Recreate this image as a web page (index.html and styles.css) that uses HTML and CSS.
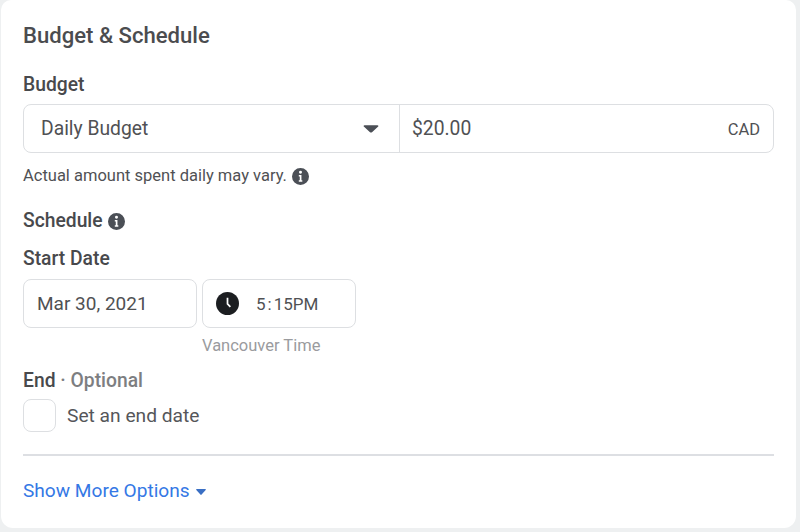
FILE: index.html
```html
<!DOCTYPE html>
<html lang="en">
<head>
    <meta charset="UTF-8">
    <title>Budget &amp; Schedule</title>
    <link rel="stylesheet" href="styles.css">
</head>
<body>
<div class="card">
    <h2 class="title">Budget &amp; Schedule</h2>

    <div class="label budget-label">Budget</div>
    <div class="budget-row">
        <div class="budget-select">
            <span>Daily Budget</span>
            <svg class="caret" width="16" height="9" viewBox="0 0 16 9"><path d="M1.5 1.2h13c.8 0 1.2.8.7 1.4L9 8.2c-.6.5-1.4.5-2 0L.8 2.6c-.5-.6-.1-1.4.7-1.4z"/></svg>
        </div>
        <div class="budget-amount">
            <span>$20.00</span>
            <span class="currency">CAD</span>
        </div>
    </div>
    <div class="hint">
        <span>Actual amount spent daily may vary.</span>
        <svg class="info" width="17" height="17" viewBox="0 0 16 16"><use href="#info-icon"/></svg>
    </div>

    <div class="label schedule-label">
        <span>Schedule</span>
        <svg class="info" width="17" height="17" viewBox="0 0 16 16"><use href="#info-icon"/></svg>
    </div>
    <div class="label start-label">Start Date</div>
    <div class="date-row">
        <div class="field date-field">Mar 30, 2021</div>
        <div class="time-col">
            <div class="field time-field">
                <svg width="23" height="23" viewBox="0 0 24 24"><circle cx="12" cy="12" r="12" fill="#1c1e21"/><path d="M12 6V12.5L15 15.5" fill="none" stroke="#fff" stroke-width="1.8"/></svg>
                <span class="time-text">5<span class="colon">:</span>15PM</span>
            </div>
            <div class="timezone">Vancouver Time</div>
        </div>
    </div>

    <div class="label end-label">End <span class="optional">· Optional</span></div>
    <div class="end-row">
        <div class="checkbox"></div>
        <span>Set an end date</span>
    </div>

    <div class="divider"></div>
    <div class="more">
        <span>Show More Options</span>
        <svg width="10" height="6" viewBox="0 0 10 6"><path d="M.8 0h8.4c.6 0 .9.7.5 1.1L5.6 5.6c-.3.4-.9.4-1.2 0L.3 1.1C-.1.7.2 0 .8 0z"/></svg>
    </div>
</div>

<svg class="defs" width="0" height="0">
    <symbol id="info-icon" viewBox="0 0 16 16">
        <path fill-rule="evenodd" d="M8 0a8 8 0 1 1 0 16A8 8 0 0 1 8 0zm0 2.6a1.4 1.4 0 1 0 0 2.8 1.4 1.4 0 0 0 0-2.8zM6.4 6.6v1.5h.9v3.4h-.9V13h3.3v-1.5h-.8V6.6z"/>
    </symbol>
</svg>
</body>
</html>
```

FILE: styles.css
```css
html, body {
    margin: 0;
    height: 100%;
}
body {
    width: 800px;
    height: 532px;
    overflow: hidden;
    background-color: #eef0f1;
    font-family: Roboto, "Liberation Sans", sans-serif;
    color: #4b4c4f;
}
.card {
    box-sizing: border-box;
    width: 795px;
    height: 528px;
    margin-left: 1px;
    padding: 22px 22px 0;
    background-color: #fff;
    border-radius: 10px 10px 12px 12px;
}
.title {
    margin: 0;
    font-size: 22.1px;
    line-height: 26px;
    font-weight: 500;
    color: #4b4c4f;
}
.label {
    font-size: 19.3px;
    line-height: 24px;
    font-weight: 500;
    color: #48494c;
}
.budget-label {
    margin-top: 25px;
}
.budget-row {
    box-sizing: border-box;
    display: flex;
    width: 751px;
    height: 49px;
    margin-top: 7px;
    border: 1px solid #dddfe2;
    border-radius: 8px;
    font-size: 19.3px;
    color: #505154;
}
.budget-select {
    box-sizing: border-box;
    display: flex;
    align-items: center;
    justify-content: space-between;
    width: 376px;
    padding: 0 20px 0 17px;
    border-right: 1px solid #dddfe2;
}
.caret {
    fill: #4b4f56;
}
.budget-amount {
    flex: 1;
    display: flex;
    align-items: center;
    justify-content: space-between;
    padding: 0 13px 0 12px;
}
.currency {
    font-size: 16.5px;
    margin-top: 2px;
}
.hint {
    display: flex;
    align-items: center;
    gap: 5px;
    margin-top: 13px;
    font-size: 16.5px;
    line-height: 20px;
    color: #505154;
}
.info {
    fill: #4b4f56;
    flex: none;
}
.schedule-label {
    display: flex;
    align-items: center;
    gap: 5px;
    margin-top: 23px;
}
.start-label {
    margin-top: 14px;
}
.date-row {
    display: flex;
    gap: 5px;
    margin-top: 8px;
}
.field {
    box-sizing: border-box;
    height: 49px;
    border: 1px solid #dddfe2;
    border-radius: 8px;
    display: flex;
    align-items: center;
    font-size: 19px;
    color: #505154;
}
.date-field {
    width: 174px;
    padding-left: 13px;
}
.time-col {
    width: 154px;
}
.time-field {
    padding-left: 13px;
    gap: 17px;
}
.time-text {
    font-size: 17px;
}
.colon {
    margin: 0 2px;
}
.timezone {
    margin-top: 8px;
    font-size: 16.5px;
    line-height: 20px;
    color: #9a9b9e;
}
.end-label {
    margin-top: 13px;
}
.optional {
    color: #7d7e81;
}
.end-row {
    display: flex;
    align-items: center;
    gap: 11px;
    margin-top: 6px;
    font-size: 19.2px;
    color: #55565a;
}
.checkbox {
    box-sizing: border-box;
    width: 33px;
    height: 33px;
    border: 1px solid #dddfe2;
    border-radius: 8px;
}
.divider {
    width: 751px;
    height: 2px;
    margin-top: 22px;
    background-color: #dddfe3;
}
.more {
    display: flex;
    align-items: center;
    gap: 6px;
    margin-top: 24px;
    font-size: 19.1px;
    line-height: 22px;
    color: #3578e5;
}
.more svg {
    fill: #3a6fc4;
    margin-top: 2px;
}
.defs {
    position: absolute;
}
```
